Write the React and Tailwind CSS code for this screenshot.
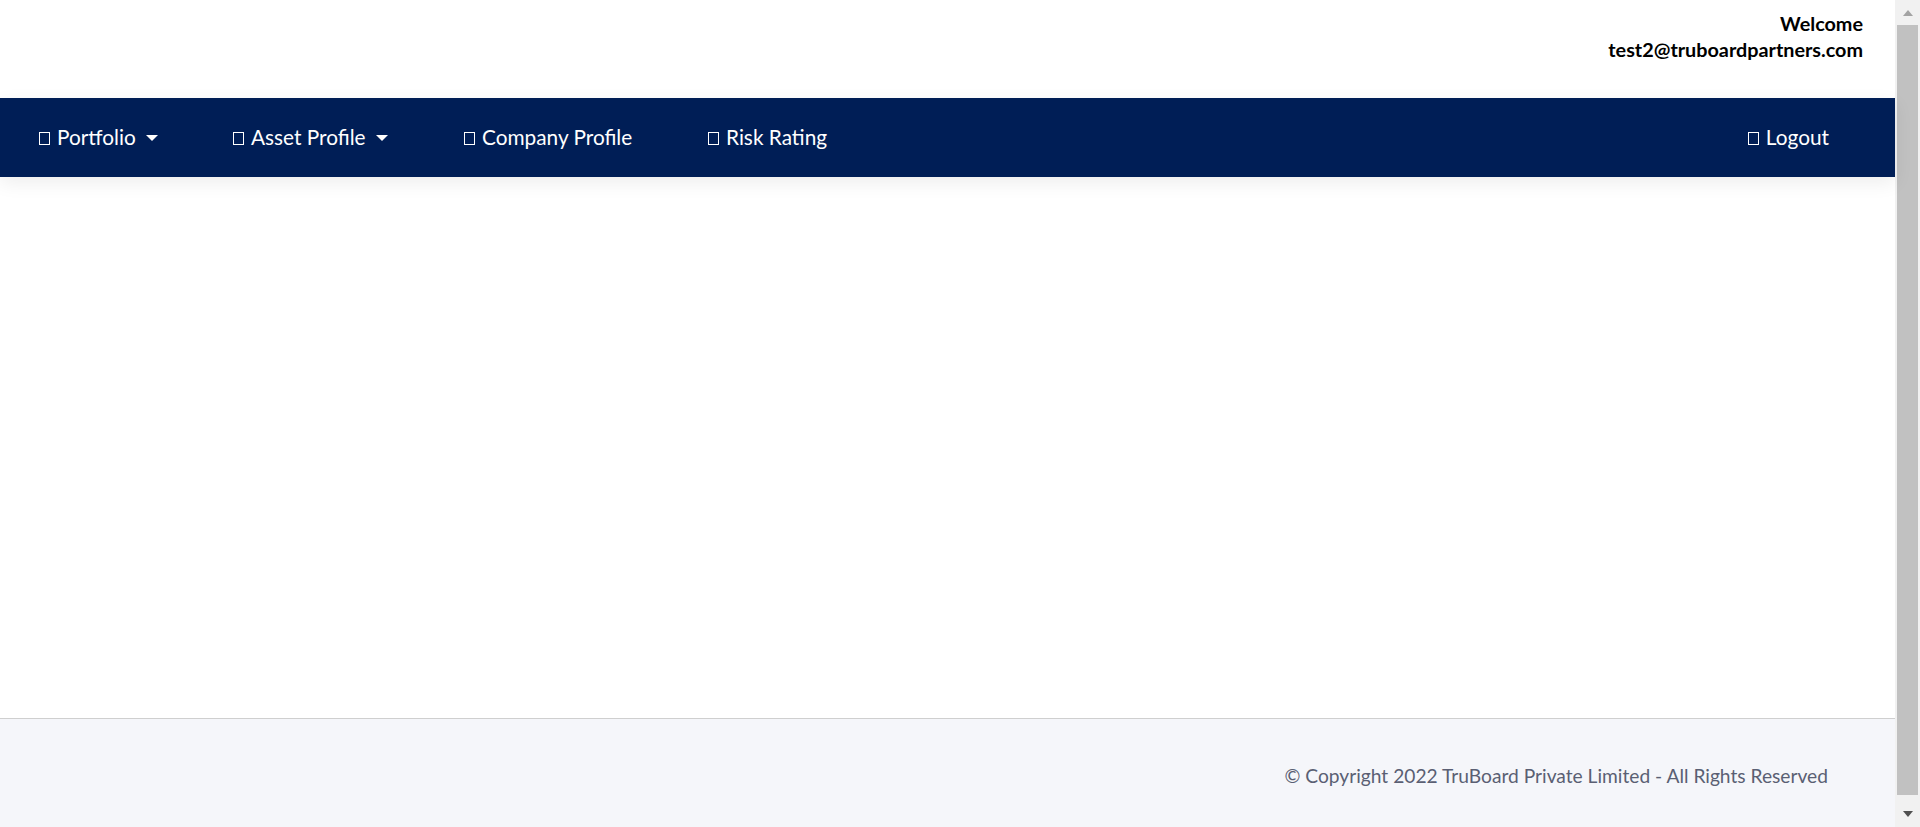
import React from "react";

function Box() {
  return <span className="inline-block w-[11px] h-[13px] border border-white mt-[3px] mr-[7px] shrink-0" />;
}

function Caret() {
  return (
    <span className="inline-block w-0 h-0 border-l-[6px] border-r-[6px] border-t-[6px] border-l-transparent border-r-transparent border-t-white ml-[10px] mt-[2px]" />
  );
}

export default function App() {
  const font = { fontFamily: "Lato, 'Open Sans', sans-serif" };
  return (
    <div className="flex h-[827px] w-full overflow-hidden bg-white" style={font}>
      <div className="flex-1 min-w-0 flex flex-col">
        <header className="h-[98px] flex flex-col items-end pr-[32px] pt-[11px] font-bold text-black text-[19.8px] leading-[25.5px]">
          <div>Welcome</div>
          <div>test2@truboardpartners.com</div>
        </header>
        <nav className="h-[79px] bg-[#001e56] flex items-center justify-between pl-[39px] pr-[66px] pb-[2px] text-white text-[20.8px] leading-[24px] shadow-[0_6px_18px_rgba(0,0,0,0.07)] relative z-10">
          <div className="flex items-center">
            <div className="w-[194px] flex items-center">
              <Box />
              <span>Portfolio</span>
              <Caret />
            </div>
            <div className="w-[231px] flex items-center">
              <Box />
              <span>Asset Profile</span>
              <Caret />
            </div>
            <div className="w-[244px] flex items-center">
              <Box />
              <span>Company Profile</span>
            </div>
            <div className="flex items-center">
              <Box />
              <span>Risk Rating</span>
            </div>
          </div>
          <div className="flex items-center">
            <Box />
            <span>Logout</span>
          </div>
        </nav>
        <main className="h-[541px] bg-white" />
        <footer className="flex-1 border-t border-[#cfcfcf] bg-[#f5f6fa] flex justify-end pr-[67px] pt-[45px]">
          <span className="text-[#5a5f73] text-[19.2px] leading-[24px]">
            © Copyright 2022 TruBoard Private Limited - All Rights Reserved
          </span>
        </footer>
      </div>
      <div className="w-[25px] bg-[#f1f1f1] flex flex-col shrink-0">
        <div className="h-[25px] flex justify-center pt-[10px]">
          <span className="w-0 h-0 border-l-[5.5px] border-r-[5.5px] border-b-[6px] border-l-transparent border-r-transparent border-b-[#a3a3a3]" />
        </div>
        <div className="flex-1 ml-[2px] mr-[2px] bg-[#c1c1c1]" />
        <div className="h-[32px] flex justify-center pt-[16px]">
          <span className="w-0 h-0 border-l-[5.5px] border-r-[5.5px] border-t-[6px] border-l-transparent border-r-transparent border-t-[#505050]" />
        </div>
      </div>
    </div>
  );
}
